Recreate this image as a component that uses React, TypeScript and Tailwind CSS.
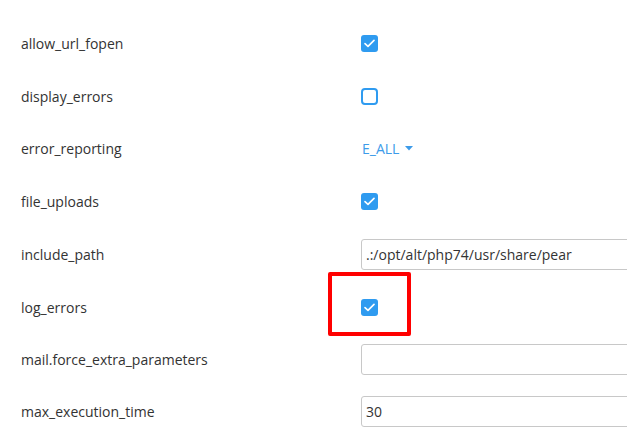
import React from 'react';

type Row =
  | { name: string; kind: 'check'; checked: boolean; h: string; mark?: boolean }
  | { name: string; kind: 'select'; value: string; h: string }
  | { name: string; kind: 'text'; value: string; h: string };

const rows: Row[] = [
  { name: 'allow_url_fopen', kind: 'check', checked: true, h: 'h-[53px]' },
  { name: 'display_errors', kind: 'check', checked: false, h: 'h-[52px]' },
  { name: 'error_reporting', kind: 'select', value: 'E_ALL', h: 'h-[53px]' },
  { name: 'file_uploads', kind: 'check', checked: true, h: 'h-[53px]' },
  { name: 'include_path', kind: 'text', value: '.:/opt/alt/php74/usr/share/pear', h: 'h-[52px]' },
  { name: 'log_errors', kind: 'check', checked: true, h: 'h-[54px]', mark: true },
  { name: 'mail.force_extra_parameters', kind: 'text', value: '', h: 'h-[51px]' },
  { name: 'max_execution_time', kind: 'text', value: '30', h: 'h-[53px]' },
];

function Checkbox({ checked }: { checked: boolean }) {
  if (!checked) {
    return <span className="block w-[17px] h-[17px] rounded-[4px] border-2 border-[#2f9bf0] bg-white" />;
  }
  return (
    <span className="flex items-center justify-center w-[17px] h-[17px] rounded-[3px] bg-[#2f9bf0]">
      <svg width="11" height="9" viewBox="0 0 11 9" fill="none">
        <path d="M1 4.6 L4 7.4 L10 1.4" stroke="white" strokeWidth="1.6" strokeLinecap="round" strokeLinejoin="round" />
      </svg>
    </span>
  );
}

function Control({ row }: { row: Row }) {
  if (row.kind === 'check') {
    return (
      <div className="relative">
        <Checkbox checked={row.checked} />
        {row.mark && (
          <div className="absolute left-[-33px] top-[-27px] w-[83px] h-[64px] border-4 border-[#ff0000] rounded-[2px]" />
        )}
      </div>
    );
  }
  if (row.kind === 'select') {
    return (
      <div className="flex items-center gap-[6px] pl-[1px] text-[14px] text-[#3d9be9]">
        <span>{row.value}</span>
        <svg width="8" height="5" viewBox="0 0 8 5">
          <path d="M0 0 H8 L4 4.5 Z" fill="#3d9be9" />
        </svg>
      </div>
    );
  }
  return (
    <input
      readOnly
      value={row.value}
      className="w-[300px] h-[31px] rounded-[3px] border border-[#c8c8c8] bg-white pl-[4px] text-[14px] text-[#333] outline-none"
    />
  );
}

export default function App() {
  return (
    <div className="w-[627px] h-[434px] overflow-hidden bg-white pt-[17px] font-['Open_Sans',sans-serif] text-[14px] text-[#333]">
      {rows.map((row) => (
        <div key={row.name} className={`flex items-center ${row.h}`}>
          <div className="w-[361px] shrink-0 pl-[21px]">{row.name}</div>
          <div className="flex-1">
            <Control row={row} />
          </div>
        </div>
      ))}
    </div>
  );
}
